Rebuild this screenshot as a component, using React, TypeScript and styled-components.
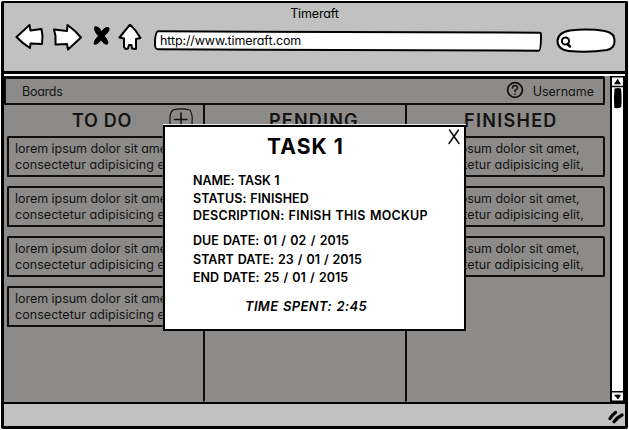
import React from "react";
import styled, { createGlobalStyle } from "styled-components";

const GlobalStyle = createGlobalStyle`
  * { box-sizing: border-box; }
  body { margin: 0; background: #fff; overflow: hidden; }
`;

const Screen = styled.div`
  width: 629px;
  height: 430px;
  padding: 1px;
  background: #fff;
  color: #000;
  font-family: Inter, "Liberation Sans", sans-serif;
  font-feature-settings: "cv11", "calt" 0;
  font-size: 12.5px;
  line-height: 16px;
`;

const Window = styled.div`
  position: relative;
  display: flex;
  flex-direction: column;
  width: 627px;
  height: 428px;
  border: solid #000;
  border-width: 2px 3px 3px 3px;
  border-radius: 2px 1px 2px 2px;
  background: #c1c1c1;
`;

const Header = styled.header`
  height: 71px;
  flex: none;
  border-bottom: 3px solid #000;
`;

const Label = styled.span<{ $spacing?: number }>`
  white-space: nowrap;
  letter-spacing: ${(p) => p.$spacing ?? 0}px;
`;

const TitleBar = styled.div`
  height: 21px;
  padding-top: 3px;
  text-align: center;
`;

const Toolbar = styled.div`
  display: flex;
  align-items: flex-start;
`;

const NavIcons = styled.svg`
  flex: none;
  width: 150px;
  height: 36px;
`;

const AddressBar = styled.div`
  position: relative;
  display: flex;
  align-items: center;
  width: 388px;
  height: 20px;
  margin-top: 7px;
  padding: 0 0 1px 6px;

  &::before {
    content: "";
    position: absolute;
    inset: 0;
    background: #fff;
    border: 2px solid #000;
    border-radius: 4px 2px 3px 4px / 12px 3px 14px 6px;
    transform: rotate(0.2deg);
  }
  > span { position: relative; }
`;

const SearchIcon = styled.svg`
  flex: none;
  width: 64px;
  height: 30px;
  margin: 2px 0 0 13px;
`;

const Body = styled.main`
  display: flex;
  height: 328px;
  flex: none;
  background: #8c8b89;
  border-top: 2px solid #fff;
`;

const Content = styled.div`
  display: flex;
  flex-direction: column;
  width: 606px;
`;

const MenuBar = styled.nav`
  display: flex;
  align-items: center;
  width: 601px;
  height: 29px;
  padding: 1px 9px 0 16px;
  border: 2px solid #0f0e0c;
  border-top-width: 3px;
  border-radius: 1px 2px 1px 1px;
  color: #141312;
`;

const HelpIcon = styled.svg`
  width: 18px;
  height: 18px;
  margin: -3px 9px 0 auto;
`;

const Columns = styled.div`
  display: grid;
  grid-template-columns: 201px 202px 203px;
  flex: 1;
`;

const Column = styled.section<{ $divided?: boolean }>`
  position: relative;
  border-right: ${(p) => (p.$divided ? "2px solid #0f0e0c" : "none")};
  border-bottom-right-radius: 2px;
  padding: 0 ${(p) => (p.$divided ? 3 : 5)}px 0 3px;
`;

const ColumnTitle = styled.h2<{ $spacing: number; $shift: number }>`
  height: 31px;
  margin: 0;
  padding: 4px 0 0 ${(p) => p.$shift}px;
  font-size: 18px;
  line-height: 23px;
  font-weight: 600;
  letter-spacing: ${(p) => p.$spacing}px;
  color: #141312;
`;

const AddIcon = styled.svg`
  position: absolute;
  left: 164px;
  top: 2px;
  width: 26px;
  height: 26px;
`;

const Card = styled.article<{ $indent: number }>`
  display: flex;
  flex-direction: column;
  height: 41px;
  margin-bottom: 9px;
  padding: 3px 0 0 ${(p) => p.$indent}px;
  border: 2px solid #0f0e0c;
  border-radius: 1px 2px 2px 1px / 2px 3px 1px 1px;
  color: #141312;
`;

const Scrollbar = styled.aside`
  display: flex;
  flex-direction: column;
  justify-content: space-between;
  width: 15px;
  background: #fff;
  border: solid #000;
  border-width: 0 2px 0 2px;
`;

const ScrollIcon = styled.svg`
  display: block;
  width: 11px;
`;

const Footer = styled.footer`
  display: flex;
  flex: 1;
  justify-content: flex-end;
  border-top: 2px solid #000;
`;

const Grip = styled.svg`
  width: 20px;
  height: 20px;
`;

const Modal = styled.div`
  position: absolute;
  left: 159px;
  top: 122px;
  width: 303px;
  height: 206px;
  padding: 9px 0 0 28px;
  background: #fff;
  border: 2px solid #000;
  box-shadow: 0 -1px 0 #e8e8e8, -1px 0 0 #77767480;
`;

const ModalTitle = styled.h1`
  margin: 0 0 15px 74px;
  font-size: 21px;
  line-height: 22px;
  font-weight: 700;
  letter-spacing: 1.1px;
`;

const CloseIcon = styled.svg`
  position: absolute;
  right: 3px;
  top: 1px;
  width: 14px;
  height: 18px;
`;

const Details = styled.div`
  display: flex;
  flex-direction: column;
  font-size: 12.5px;
  font-weight: 600;
`;

const Detail = styled.div<{ $height: number; $spacing: number; $gap: number }>`
  height: ${(p) => p.$height}px;
  white-space: nowrap;
  letter-spacing: ${(p) => p.$spacing}px;
  word-spacing: ${(p) => p.$gap}px;
`;

const TimeSpent = styled.div`
  padding: 9px 0 0 52px;
  font-size: 13px;
  font-style: italic;
  font-weight: 600;
  letter-spacing: 0.33px;
  word-spacing: 1px;
`;

const Task = ({ indent = 6 }: { indent?: number }) => (
  <Card $indent={indent}>
    <Label $spacing={-0.04}>lorem ipsum dolor sit amet,</Label>
    <Label $spacing={0.05}>consectetur adipisicing elit,</Label>
  </Card>
);

const details = [
  { text: "NAME: TASK 1", height: 18, spacing: -0.05, gap: 0.4 },
  { text: "STATUS: FINISHED", height: 17, spacing: 0.1, gap: 0.5 },
  { text: "DESCRIPTION: FINISH THIS MOCKUP", height: 25, spacing: 0.25, gap: 0.8 },
  { text: "DUE DATE: 01 / 02 / 2015", height: 19, spacing: -0.03, gap: 1.2 },
  { text: "START DATE: 23 / 01 / 2015", height: 18, spacing: 0, gap: 0.8 },
  { text: "END DATE: 25 / 01 / 2015", height: 19, spacing: -0.03, gap: 1.1 },
];

export default function App() {
  return (
    <Screen>
      <GlobalStyle />
      <Window>
        <Header>
          <TitleBar>
            <Label $spacing={-0.15}>Timeraft</Label>
          </TitleBar>
          <Toolbar>
            <NavIcons viewBox="4 24 150 36" fill="#fff" stroke="#000" strokeWidth="2" strokeLinejoin="round" strokeLinecap="round">
              <path d="M16.5 37 L29.5 25 L30.5 30.5 L41.5 29 L42.5 36 L42 44 L30.5 43.5 L30 48 Q22 43 16.5 37Z" />
              <path d="M54 29.5 L67 31 L67.5 25 L75 31 L81 37.5 L68 49.5 L67 44 L55.5 44.5 L55.5 36Z" />
              <path d="M130 24.5 L119.5 37.5 L124 38.5 L124 47 L125.5 49 L128 48.5 L129 45 L131.5 45 L132 48.5 L136 49 L136 39 L140.5 38 Q136 30 130 24.5Z" />
              <path fill="#000" strokeWidth="1" d="M95 27 Q99 26 101.5 32 Q105 26 109 28 Q110 31 104 36 Q109 41 107.5 44 Q104 45 101 39.5 Q98 45 94 44 Q94 40 98.5 36 Q93 30 95 27Z" />
            </NavIcons>
            <AddressBar>
              <Label $spacing={-0.12}>http://www.timeraft.com</Label>
            </AddressBar>
            <SearchIcon viewBox="555 26 64 30" fill="#fff" stroke="#000" strokeWidth="2" strokeLinecap="round">
              <path d="M557.5 41 C558 34 563 31.5 570 30.5 Q588 28.5 605 31 C612 32.5 614.5 36 614.5 40 C615 46 612 49 607 50 Q588 53 569 51 C561 50 557.5 46 557.5 41Z" />
              <circle cx="565.5" cy="41" r="3.6" />
              <path d="M567.5 44 L570 46.5" strokeWidth="2.5" />
            </SearchIcon>
          </Toolbar>
        </Header>
        <Body>
          <Content>
            <MenuBar>
              <Label $spacing={-0.25}>Boards</Label>
              <HelpIcon viewBox="0 0 18 18" fill="none" stroke="#141312" strokeLinecap="round">
                <circle cx="9" cy="9" r="7.4" strokeWidth="1.8" />
                <path d="M6.5 7 Q6.5 4.5 9.2 4.6 Q12 5 11.5 7.2 Q11 8.7 9 9.2 V10.5 M9 13 V13.2" strokeWidth="1.6" />
              </HelpIcon>
              <Label>Username</Label>
            </MenuBar>
            <Columns>
              <Column $divided>
                <ColumnTitle $spacing={0.7} $shift={65}>TO DO</ColumnTitle>
                <AddIcon viewBox="0 0 26 26" fill="none" stroke="#141312" strokeWidth="1.2" strokeLinecap="round">
                  <path d="M5 3 Q13 .7 22 3 Q25 8 24 15 Q25 22 21 24 L5 24 Q1.5 21 2 13 Q1.5 6 5 3Z" />
                  <path d="M13 6 V19 M6.5 12.5 H19" strokeWidth="1.6" />
                </AddIcon>
                <Task />
                <Task />
                <Task />
                <Task />
              </Column>
              <Column $divided>
                <ColumnTitle $spacing={1.2} $shift={61}>PENDING</ColumnTitle>
              </Column>
              <Column>
                <ColumnTitle $spacing={1.3} $shift={54}>FINISHED</ColumnTitle>
                <Task indent={8} />
                <Task indent={8} />
                <Task indent={8} />
              </Column>
            </Columns>
          </Content>
          <Scrollbar>
            <ScrollIcon viewBox="0 0 11 33" height="33">
              <path d="M0 .7 H11 M0 10.5 H11" stroke="#000" strokeWidth="1.4" />
              <path d="M5.5 2.7 L9 8.2 H2Z" />
              <path d="M2.5 12.5 Q6 11.5 9 12.5 Q10 20 9.3 31 Q6 33 2.3 31.7 Q1.5 22 2.5 12.5Z" />
            </ScrollIcon>
            <ScrollIcon viewBox="0 0 11 11" height="11">
              <path d="M0 .7 H11 M0 10.3 H11" stroke="#000" strokeWidth="1.4" />
              <path d="M2 4 Q5 3 9 4 L6 8.5Z" />
            </ScrollIcon>
          </Scrollbar>
        </Body>
        <Footer>
          <Grip viewBox="604 404 20 20" fill="none" stroke="#000" strokeWidth="3.2" strokeLinecap="round">
            <path d="M609 418.5 Q611 415 614.5 412.5 M613 421.8 Q616 417.5 621 415" />
          </Grip>
        </Footer>
        <Modal>
          <ModalTitle>TASK 1</ModalTitle>
          <CloseIcon viewBox="0 0 14 18" fill="none" stroke="#000" strokeWidth="1.4" strokeLinecap="round">
            <path d="M2.5 2 L12 15.5 M11.5 2 L2 15.5" />
          </CloseIcon>
          <Details>
            {details.map((d) => (
              <Detail key={d.text} $height={d.height} $spacing={d.spacing} $gap={d.gap}>{d.text}</Detail>
            ))}
          </Details>
          <TimeSpent>TIME SPENT: 2:45</TimeSpent>
        </Modal>
      </Window>
    </Screen>
  );
}
